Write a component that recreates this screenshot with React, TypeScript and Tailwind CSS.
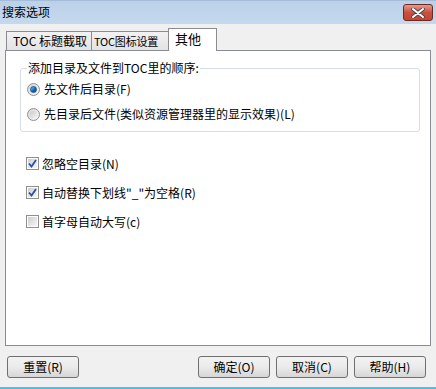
import React from "react";

const font = { fontFamily: '"Noto Sans CJK SC", "Liberation Sans", sans-serif' };

function Radio({ checked }: { checked?: boolean }) {
  return (
    <span className="w-[13px] h-[13px] rounded-full border border-[#8e8f8f] bg-gradient-to-br from-[#d8d8d8] to-[#f8f8f8] flex items-center justify-center shrink-0">
      {checked ? (
        <span className="w-[7px] h-[7px] rounded-full bg-gradient-to-br from-[#8fd0ff] via-[#1c6fc2] to-[#0a3e8a] border border-[#14508f]" />
      ) : (
        <span className="w-[7px] h-[7px] rounded-full bg-gradient-to-br from-[#c9c9c9] to-[#f4f4f4]" />
      )}
    </span>
  );
}

function Check({ checked }: { checked?: boolean }) {
  return (
    <span className="w-[13px] h-[13px] border border-[#8e8f8f] bg-white p-[1px] shrink-0">
      <span className="w-full h-full bg-gradient-to-br from-[#cfcfcf] to-[#f6f6f6] flex items-center justify-center">
        {checked && (
          <svg width="9" height="9" viewBox="0 0 9 9">
            <path d="M1 4.5 L3.5 7.5 L8 1" fill="none" stroke="#2a4fa8" strokeWidth="1.8" />
          </svg>
        )}
      </span>
    </span>
  );
}

function Btn({ label, w }: { label: string; w: string }) {
  return (
    <button
      className={`${w} h-[22px] rounded-[3px] border border-[#707070] bg-gradient-to-b from-[#f2f2f2] via-[#ebebeb] to-[#d6d6d6] text-[12px] text-black leading-none flex items-center justify-center`}
      style={font}
    >
      {label}
    </button>
  );
}

export default function App() {
  return (
    <div className="w-[436px] h-[389px] bg-[#f0f0f0] flex flex-col border-b-2 border-[#3fc6ea] text-black" style={font}>
      {/* title bar */}
      <div className="h-[24px] bg-gradient-to-b from-[#bcd1e8] to-[#c4d8ee] flex items-start justify-between pl-[2px] pr-[3px] border-t border-[#a4bcd8]">
        <span className="text-[12px] leading-[22px]">搜索选项</span>
        <span className="mt-[3px] w-[30px] h-[17px] rounded-[3px] border border-[#6b2a26] bg-gradient-to-b from-[#e59a8b] via-[#c9503c] to-[#c44630] flex items-center justify-center">
          <svg width="14" height="10" viewBox="0 0 14 10">
            <path d="M2 1 L12 9 M12 1 L2 9" stroke="#3d4250" strokeWidth="3.6" strokeLinecap="round" />
            <path d="M2 1 L12 9 M12 1 L2 9" stroke="#ffffff" strokeWidth="2" strokeLinecap="round" />
          </svg>
        </span>
      </div>

      {/* tabs */}
      <div className="pt-[5px] px-[5px] flex flex-col">
        <div className="flex items-end pl-[1px] h-[22px] relative z-10 -mb-[1px]">
          <div className="w-[86px] h-[19px] border border-[#898c95] border-b-0 bg-gradient-to-b from-[#f2f2f2] to-[#e3e3e3] text-[12px] leading-[18px] pl-[6px] mb-[1px] whitespace-nowrap">
            TOC 标题截取
          </div>
          <div className="w-[77px] h-[19px] border border-[#898c95] border-b-0 border-l-0 bg-gradient-to-b from-[#f2f2f2] to-[#e3e3e3] text-[11px] leading-[18px] pl-[2px] mb-[1px] whitespace-nowrap tracking-[-0.2px] overflow-hidden">
            TOC图标设置
          </div>
          <div className="w-[49px] h-[23px] border border-[#898c95] border-b-0 -ml-[1px] bg-white text-[13px] leading-[20px] pl-[6px]">
            其他
          </div>
        </div>

        {/* panel */}
        <div className="h-[296px] border border-[#898c95] bg-white flex flex-col pl-[14px] pr-[10px] pt-[17px]">
          <div className="h-[64px] border border-[#d5dfe5] rounded-[3px] relative flex flex-col pl-[6px] pt-[13px] gap-[11px]">
            <span className="absolute -top-[9px] left-[6px] bg-white px-[1px] text-[12px] leading-[16px]">
              添加目录及文件到TOC里的顺序:
            </span>
            <div className="flex items-center gap-[4px] text-[12px] h-[14px]">
              <Radio checked />
              <span>先文件后目录(F)</span>
            </div>
            <div className="flex items-center gap-[4px] text-[12px] h-[14px]">
              <Radio />
              <span>先目录后文件(类似资源管理器里的显示效果)(L)</span>
            </div>
          </div>

          <div className="flex flex-col gap-[16px] pt-[25px] pl-[6px] text-[12px]">
            <div className="flex items-center gap-[3px] h-[13px]">
              <Check checked />
              <span>忽略空目录(N)</span>
            </div>
            <div className="flex items-center gap-[3px] h-[13px]">
              <Check checked />
              <span>自动替换下划线"_"为空格(R)</span>
            </div>
            <div className="flex items-center gap-[3px] h-[13px]">
              <Check />
              <span>首字母自动大写(c)</span>
            </div>
          </div>
        </div>
      </div>

      {/* buttons */}
      <div className="flex items-center pl-[7px] pr-[10px] mt-[10px]">
        <Btn label="重置(R)" w="w-[72px]" />
        <div className="flex-1" />
        <div className="flex gap-[6px]">
          <Btn label="确定(O)" w="w-[72px]" />
          <Btn label="取消(C)" w="w-[72px]" />
          <Btn label="帮助(H)" w="w-[72px]" />
        </div>
      </div>
    </div>
  );
}
